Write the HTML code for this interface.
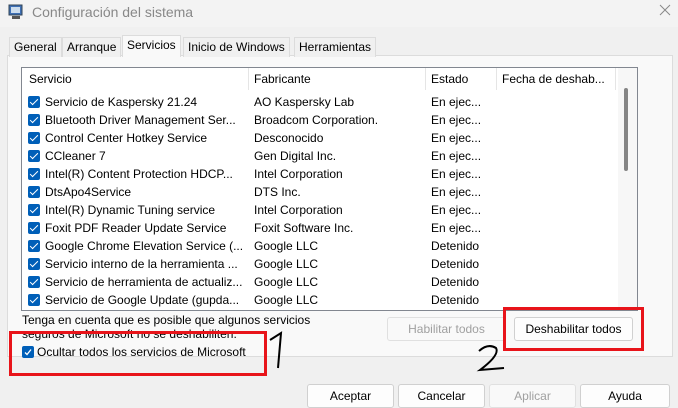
<!DOCTYPE html>
<html><head><style>
body{margin:0;width:678px;height:408px;background:#f0f0f0;font-family:"Liberation Sans",sans-serif;font-size:12px;color:#000;position:relative;overflow:hidden}
.a{position:absolute;white-space:nowrap}
.tb{position:absolute;left:0;top:0;width:678px;height:27px;background:#f3f3f3}
.tab{position:absolute;top:37px;height:19px;line-height:19px;padding:0 4px;border:1px solid #dcdcdc;border-bottom:none;background:#f0f0f0}
.panel{position:absolute;left:7px;top:55px;width:664px;height:300px;background:#f9f9f9;border:1px solid #dcdcdc}
.list{position:absolute;left:21px;top:67px;width:615px;height:242px;background:#fff;border:1px solid #828790;overflow:hidden}
.row{position:absolute;left:0;height:18px;line-height:18px;width:600px}
.cb{position:absolute;left:6px;top:3px;width:12px;height:12px;background:#005fb8;border-radius:2px}
.cb:after{content:"";position:absolute;left:4px;top:1px;width:3px;height:7px;border:solid #fff;border-width:0 1.5px 1.5px 0;transform:rotate(45deg)}
.btn{position:absolute;height:22px;line-height:22px;text-align:center;background:#fdfdfd;border:1px solid #d0d0d0;border-radius:3px}
.red{position:absolute;border:3px solid #e8141a}
</style></head><body>
<div class="tb"></div>
<svg class="a" style="left:8px;top:4px" width="16" height="16"><rect x="1" y="1" width="13" height="10" fill="#3d6fb5" stroke="#345"/><rect x="3" y="3" width="9" height="6" fill="#cde"/><rect x="4" y="12" width="8" height="3" fill="#555"/></svg>
<div class="a" style="left:32px;top:4px;font-size:14px;color:#888">Configuración del sistema</div>
<svg class="a" style="left:659px;top:4px" width="12" height="12"><path d="M1 1L11 11M11 1L1 11" stroke="#888" stroke-width="1"/></svg>
<div class="panel"></div>
<div class="tab" style="left:9px">General</div>
<div class="tab" style="left:62px">Arranque</div>
<div class="tab" style="left:122px;top:35px;height:21px;background:#f9f9f9">Servicios</div>
<div class="tab" style="left:183px">Inicio de Windows</div>
<div class="tab" style="left:294px">Herramientas</div>
<div class="list">
<div class="a" style="left:7px;top:4px">Servicio</div>
<div class="a" style="left:226px;top:0;width:1px;height:22px;background:#e5e5e5"></div>
<div class="a" style="left:232px;top:4px">Fabricante</div>
<div class="a" style="left:403px;top:0;width:1px;height:22px;background:#e5e5e5"></div>
<div class="a" style="left:409px;top:4px">Estado</div>
<div class="a" style="left:474px;top:0;width:1px;height:22px;background:#e5e5e5"></div>
<div class="a" style="left:480px;top:4px">Fecha de deshab...</div>
<div class="a" style="left:593px;top:0;width:1px;height:22px;background:#e5e5e5"></div>
<div class="a" style="left:596px;top:0;width:19px;height:242px;background:#f7f7f7"></div>
<div class="a" style="left:602px;top:20px;width:4px;height:83px;background:#858585;border-radius:2px"></div>
<div class="row" style="top:25px"><div class="cb"></div><span class="a" style="left:23px">Servicio de Kaspersky 21.24</span><span class="a" style="left:232px">AO Kaspersky Lab</span><span class="a" style="left:409px">En ejec...</span></div>
<div class="row" style="top:43px"><div class="cb"></div><span class="a" style="left:23px">Bluetooth Driver Management Ser...</span><span class="a" style="left:232px">Broadcom Corporation.</span><span class="a" style="left:409px">En ejec...</span></div>
<div class="row" style="top:61px"><div class="cb"></div><span class="a" style="left:23px">Control Center Hotkey Service</span><span class="a" style="left:232px">Desconocido</span><span class="a" style="left:409px">En ejec...</span></div>
<div class="row" style="top:79px"><div class="cb"></div><span class="a" style="left:23px">CCleaner 7</span><span class="a" style="left:232px">Gen Digital Inc.</span><span class="a" style="left:409px">En ejec...</span></div>
<div class="row" style="top:97px"><div class="cb"></div><span class="a" style="left:23px">Intel(R) Content Protection HDCP...</span><span class="a" style="left:232px">Intel Corporation</span><span class="a" style="left:409px">En ejec...</span></div>
<div class="row" style="top:115px"><div class="cb"></div><span class="a" style="left:23px">DtsApo4Service</span><span class="a" style="left:232px">DTS Inc.</span><span class="a" style="left:409px">En ejec...</span></div>
<div class="row" style="top:133px"><div class="cb"></div><span class="a" style="left:23px">Intel(R) Dynamic Tuning service</span><span class="a" style="left:232px">Intel Corporation</span><span class="a" style="left:409px">En ejec...</span></div>
<div class="row" style="top:151px"><div class="cb"></div><span class="a" style="left:23px">Foxit PDF Reader Update Service</span><span class="a" style="left:232px">Foxit Software Inc.</span><span class="a" style="left:409px">En ejec...</span></div>
<div class="row" style="top:169px"><div class="cb"></div><span class="a" style="left:23px">Google Chrome Elevation Service (...</span><span class="a" style="left:232px">Google LLC</span><span class="a" style="left:409px">Detenido</span></div>
<div class="row" style="top:187px"><div class="cb"></div><span class="a" style="left:23px">Servicio interno de la herramienta ...</span><span class="a" style="left:232px">Google LLC</span><span class="a" style="left:409px">Detenido</span></div>
<div class="row" style="top:205px"><div class="cb"></div><span class="a" style="left:23px">Servicio de herramienta de actualiz...</span><span class="a" style="left:232px">Google LLC</span><span class="a" style="left:409px">Detenido</span></div>
<div class="row" style="top:223px"><div class="cb"></div><span class="a" style="left:23px">Servicio de Google Update (gupda...</span><span class="a" style="left:232px">Google LLC</span><span class="a" style="left:409px">Detenido</span></div>
</div>
<div class="a" style="left:22px;top:313px;line-height:14px">Tenga en cuenta que es posible que algunos servicios<br>seguros de Microsoft no se deshabiliten.</div>
<div class="a" style="left:22px;top:346px;width:12px;height:12px;background:#005fb8;border-radius:2px"></div>
<svg class="a" style="left:22px;top:346px" width="12" height="12"><path d="M3 6.5L5 8.5L9 3.5" stroke="#fff" fill="none" stroke-width="1.3"/></svg>
<div class="a" style="left:37px;top:345px">Ocultar todos los servicios de Microsoft</div>
<div class="btn" style="left:387px;top:317px;width:117px;color:#a0a0a0;background:#f9f9f9;border-color:#e0e0e0">Habilitar todos</div>
<div class="btn" style="left:514px;top:317px;width:117px">Deshabilitar todos</div>
<div class="red" style="left:9px;top:331px;width:252px;height:39px"></div>
<div class="red" style="left:503px;top:307px;width:135px;height:38px"></div>
<svg class="a" style="left:265px;top:330px" width="28" height="40"><path d="M5 10L16 3L13 38" stroke="#000" fill="none" stroke-width="2"/></svg>
<svg class="a" style="left:476px;top:343px" width="30" height="30"><path d="M3 8Q12 0 20 5Q24 12 4 27L28 25" stroke="#000" fill="none" stroke-width="2"/></svg>
<div class="btn" style="left:307px;top:384px;width:85px">Aceptar</div>
<div class="btn" style="left:398px;top:384px;width:85px">Cancelar</div>
<div class="btn" style="left:489px;top:384px;width:85px;color:#a0a0a0;background:#f9f9f9;border-color:#e0e0e0">Aplicar</div>
<div class="btn" style="left:580px;top:384px;width:88px">Ayuda</div>
</body></html>
